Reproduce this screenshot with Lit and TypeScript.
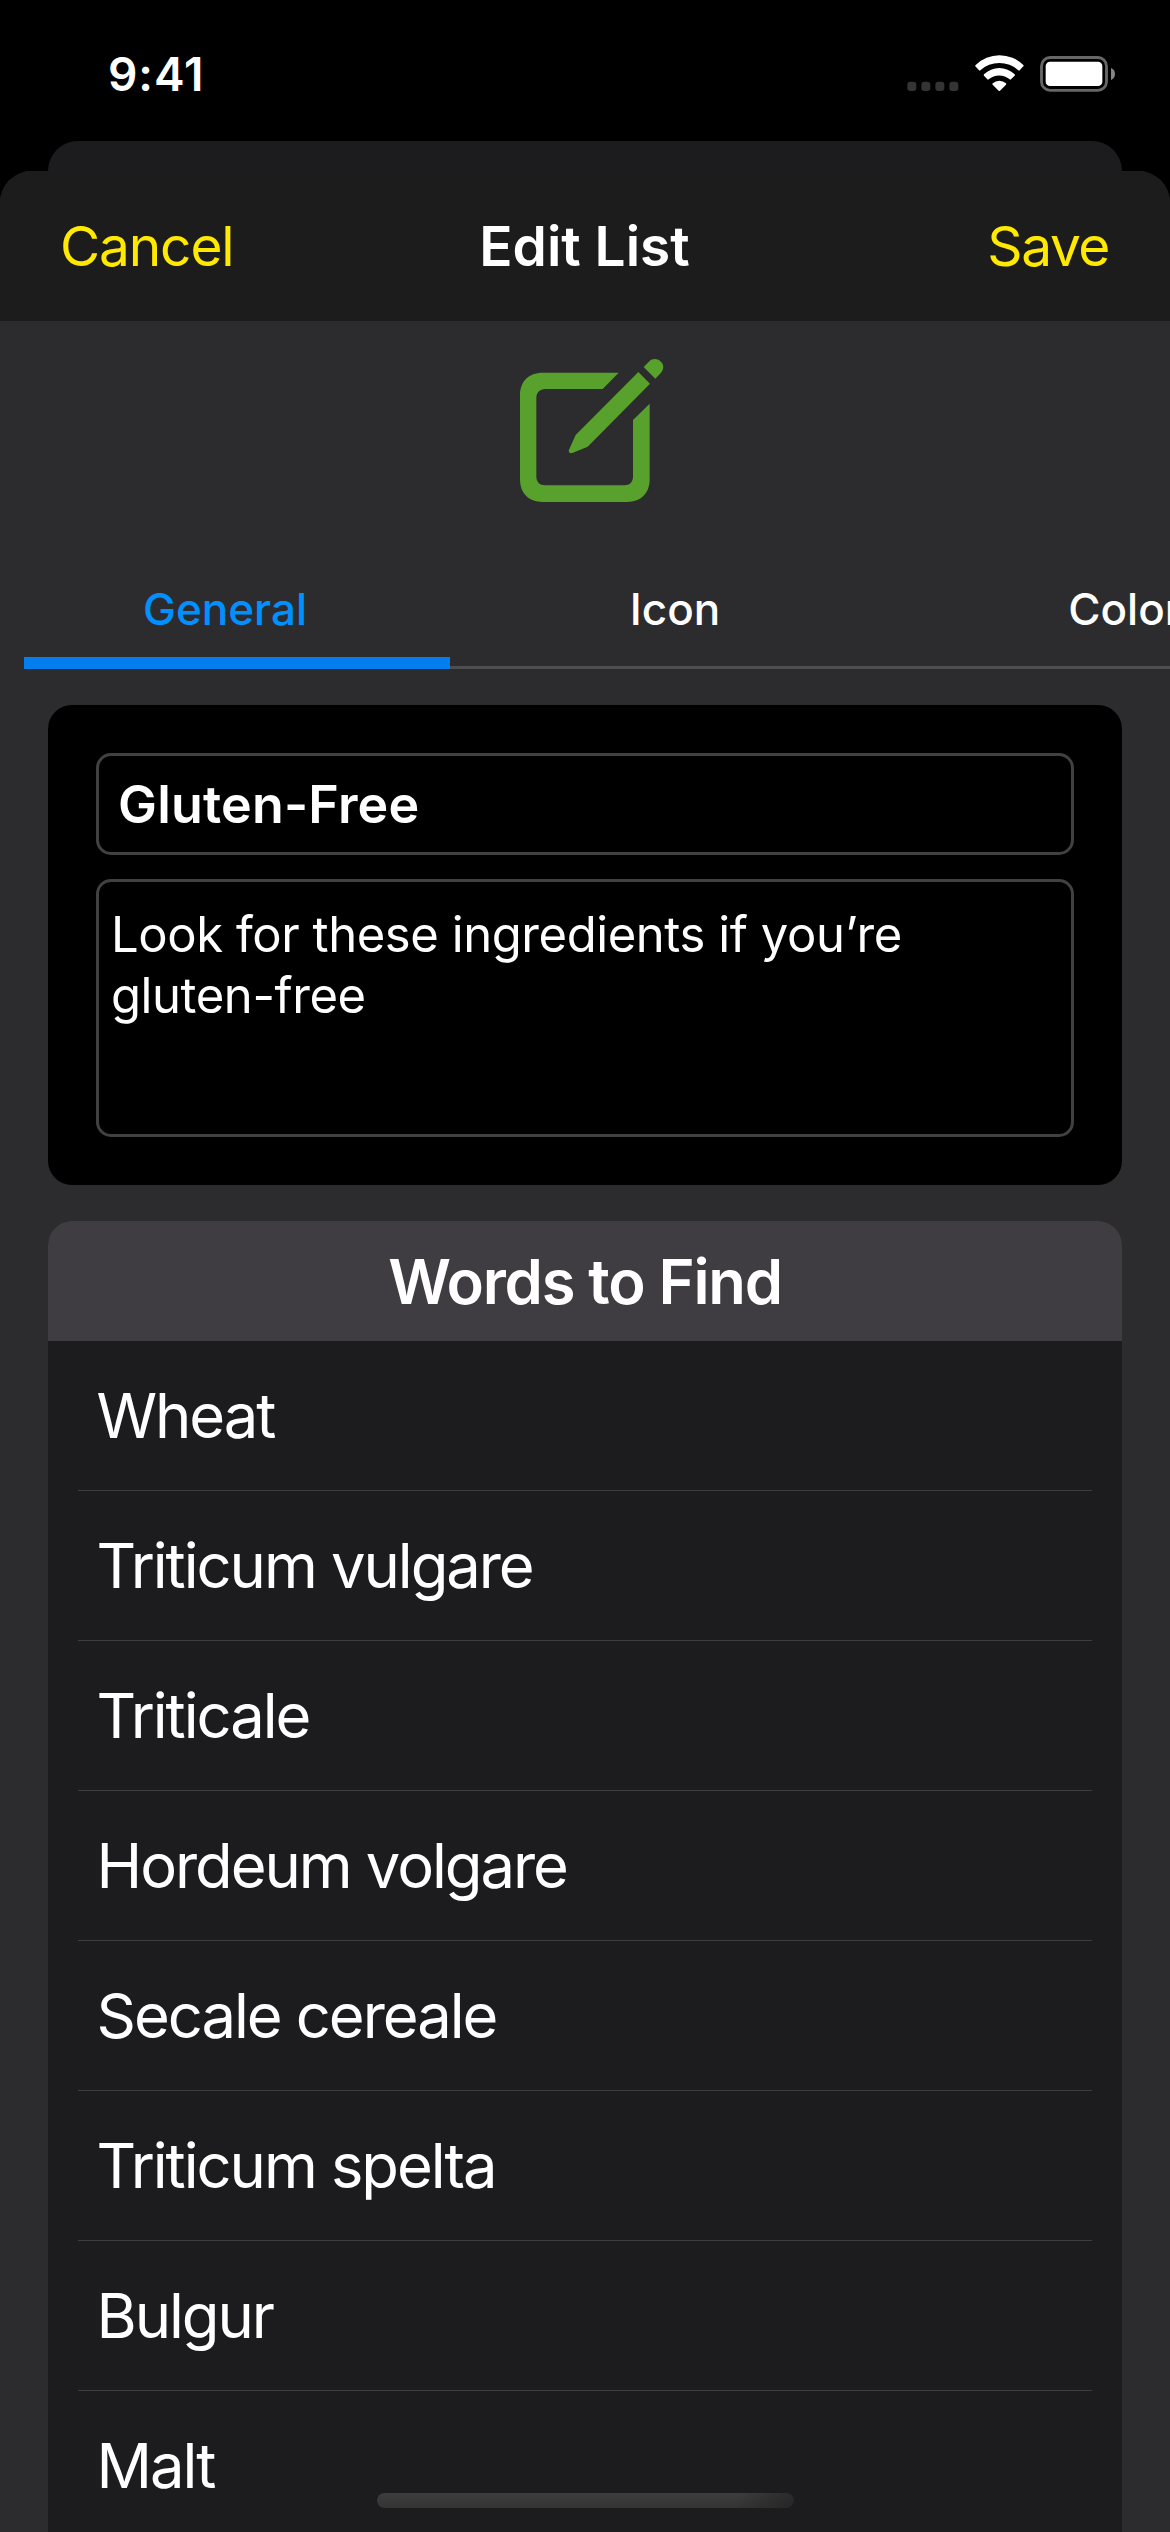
import { LitElement, html, css } from "lit";
import { customElement, property, state } from "lit/decorators.js";
import { classMap } from "lit/directives/class-map.js";

@customElement("status-bar")
export class StatusBar extends LitElement {
  static styles = css`
    :host { display: flex; justify-content: space-between; height: 141px; padding: 0 54px 0 108px; }
    .time { font-size: 46px; line-height: 56px; font-weight: 600; letter-spacing: 0.9px; margin-top: 46px; }
    .icons { display: flex; gap: 16px; margin-top: 55px; }
    svg { display: block; height: 37px; }
    .signal { width: 52px; }
    .wifi { width: 49.33px; }
    .battery { width: 76px; }
  `;
  render() {
    return html`
      <div class="time">9:41</div>
      <div class="icons">
        <svg class="signal" viewBox="80 75 156 111" fill="#343434">
          <rect x="81" y="155" width="27" height="28" rx="9"></rect>
          <rect x="123" y="155" width="27" height="28" rx="9"></rect>
          <rect x="165" y="155" width="27" height="28" rx="9"></rect>
          <rect x="207" y="155" width="27" height="28" rx="9"></rect>
        </svg>
        <svg class="wifi" viewBox="284 75 148 111" fill="#fff">
          <path d="M286 105A102 102 0 0 1 429 105Q431 107 429 109L418 121Q416 123 414 121A84 84 0 0 0 300 121Q298 123 296 121L285 109Q284 107 286 105Z"></path>
          <path d="M311 133A66 66 0 0 1 403 133Q405 135 403 137L392 148Q390 150 388 148A48 48 0 0 0 325 148Q323 150 321 148L311 137Q309 135 311 133Z"></path>
          <path d="M337 160A30 30 0 0 1 377 160Q379 162 377 164L359 182Q357 184 355 182L337 164Q335 162 337 160Z"></path>
        </svg>
        <svg class="battery" viewBox="480 75 228 111">
          <rect x="484.5" y="82.5" width="195" height="98.5" rx="26" fill="none" stroke="#676767" stroke-width="8.5"></rect>
          <rect x="497" y="95" width="170" height="73" rx="13" fill="#fff"></rect>
          <path d="M693 114C701 117 705 124 705 132C705 140 701 147 693 150Z" fill="#858585"></path>
        </svg>
      </div>
    `;
  }
}

@customElement("tab-strip")
export class TabStrip extends LitElement {
  static styles = css`
    :host { display: flex; height: 120px; margin-left: 24px; overflow: hidden; box-shadow: inset 0 -3px #4e4e51; }
    .tab {
      flex: none; box-sizing: border-box; width: 450px; display: flex; align-items: center; justify-content: center;
      font-size: 44px; font-weight: 500; color: #fff;
    }
    .tab:first-child { width: 426px; padding-right: 24px; }
    .active { color: #0091ff; box-shadow: inset 0 -12px #047eed; }
  `;
  @property({ attribute: false }) tabs: string[] = [];
  @state() private active = 0;
  render() {
    return this.tabs.map(
      (t, i) => html`<div class=${classMap({ tab: true, active: i === this.active })} @click=${() => (this.active = i)}>${t}</div>`
    );
  }
}

@customElement("word-list")
export class WordList extends LitElement {
  static styles = css`
    :host { display: block; margin: 36px 48px 0; background: #1c1c1e; border-radius: 24px 24px 0 0; overflow: hidden; }
    .head {
      height: 120px; background: #3f3d42; display: flex; align-items: center; justify-content: center;
      font-size: 61.5px; font-weight: 600; letter-spacing: -1.27px;
    }
    .row {
      box-sizing: border-box; height: 150px; margin: 0 30px; padding-left: 18.5px; display: flex; align-items: center;
      border-bottom: 1px solid #3d3d40; font-size: 61.5px; letter-spacing: -2.05px;
    }
  `;
  @property({ attribute: false }) words: string[] = [];
  render() {
    return html`
      <div class="head">Words to Find</div>
      ${this.words.map((w) => html`<div class="row">${w}</div>`)}
    `;
  }
}

@customElement("app-root")
export class AppRoot extends LitElement {
  static styles = css`
    :host {
      display: flex; flex-direction: column; position: relative; width: 1170px; height: 2532px; overflow: hidden;
      background: #000; color: #fff; font-family: Inter, "Liberation Sans", sans-serif;
    }
    status-bar { flex: none; }
    .back-sheet { flex: none; height: 30px; margin: 0 48px; background: #1c1c1e; border-radius: 30px 30px 0 0; }
    .sheet { flex: 1; min-height: 0; background: #2c2c2e; border-radius: 32px 32px 0 0; overflow: hidden; }
    .nav {
      height: 150px; box-sizing: border-box; padding: 0 61px 0 60px; background: #1c1c1c;
      display: grid; grid-template-columns: 1fr auto 1fr; align-items: center; font-size: 55px;
    }
    .action { color: #ffe900; letter-spacing: -1.15px; }
    .save { text-align: right; letter-spacing: -1.4px; }
    .title { font-weight: 600; }
    .hero { height: 228px; box-sizing: border-box; padding: 19px 0 0 10px; display: flex; justify-content: center; }
    .hero svg { width: 180px; height: 180px; }
    .card {
      margin: 36px 48px 0; box-sizing: border-box; height: 480px; padding: 48px; background: #000; border-radius: 24px;
      display: flex; flex-direction: column; gap: 24px;
    }
    .field { box-sizing: border-box; border: 3px solid #414141; border-radius: 15px; }
    .name {
      height: 102px; padding-left: 19px; display: flex; align-items: center;
      font-size: 52px; font-weight: 600; letter-spacing: 0.19px;
    }
    .notes { height: 258px; padding: 21.5px 12px; font-size: 49px; line-height: 61px; letter-spacing: -0.43px; }
    .home {
      position: absolute; left: 377px; bottom: 24px; width: 417px; height: 15px; border-radius: 7.5px;
      background: linear-gradient(100deg, transparent 86%, rgba(28, 28, 30, 0.6) 100%), linear-gradient(#3d3d3d, #343434);
    }
  `;

  @state() private name = "Gluten-Free";
  @state() private notes = "Look for these ingredients if you’re gluten-free";
  private tabs = ["General", "Icon", "Color"];
  private words = [
    "Wheat", "Triticum vulgare", "Triticale", "Hordeum volgare",
    "Secale cereale", "Triticum spelta", "Bulgur", "Malt",
  ];

  render() {
    return html`
      <status-bar></status-bar>
      <div class="back-sheet"></div>
      <div class="sheet">
        <div class="nav">
          <div class="action">Cancel</div>
          <div class="title">Edit List</div>
          <div class="action save">Save</div>
        </div>
        <div class="hero">
          <svg viewBox="0 0 540 540" fill="#58a12c">
            <path d="M356 98H128C86 98 60 124 60 166V418C60 460 86 486 128 486H381C423 486 449 460 449 418V191L399 240V409C399 426 390 436 373 436H136C119 436 109 426 109 409V175C109 158 119 147 136 147H308Z"></path>
            <path d="M415 96L450 131L263 320L217 339C210 341 204 336 207 329L227 285Z"></path>
            <path d="M431 81L448 64C456 55 473 55 481 64L484 67C492 75 492 88 483 98L466 116Z"></path>
          </svg>
        </div>
        <tab-strip .tabs=${this.tabs}></tab-strip>
        <div class="card">
          <div class="field name">${this.name}</div>
          <div class="field notes">${this.notes}</div>
        </div>
        <word-list .words=${this.words}></word-list>
      </div>
      <div class="home"></div>
    `;
  }
}
